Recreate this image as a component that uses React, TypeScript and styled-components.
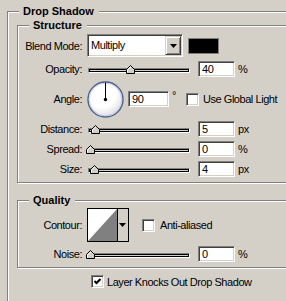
import React from "react";
import styled, { createGlobalStyle } from "styled-components";

const face = "#d4d0c8";
const shadow = "#808080";
const darkShadow = "#404040";

const GlobalStyle = createGlobalStyle`
  html, body { margin: 0; padding: 0; background: ${face}; }
  body {
    width: 286px;
    height: 301px;
    overflow: hidden;
    font-family: "Liberation Sans", Arial, sans-serif;
    font-size: 11px;
    letter-spacing: -0.45px;
    color: #000;
  }
  * { box-sizing: border-box; }
`;

const sunken = `
  border-style: solid;
  border-width: 1px;
  border-color: ${shadow} #fff #fff ${shadow};
  box-shadow: inset 1px 1px 0 ${darkShadow}, inset -1px -1px 0 ${face};
`;

const Dialog = styled.div`
  width: 286px;
  height: 301px;
  overflow: hidden;
  padding: 11px 0 0 7px;
`;

const Group = styled.section<{ $top?: number; $pad: string; $width: number }>`
  position: relative;
  width: ${(p) => p.$width}px;
  margin-top: ${(p) => p.$top ?? 0}px;
  padding: ${(p) => p.$pad};
  border: 1px solid ${shadow};
  box-shadow: inset 1px 1px 0 #fff, 1px 1px 0 #fff;
`;

const Title = styled.h3`
  position: absolute;
  top: -8px;
  left: 11px;
  margin: 0;
  padding: 0 5px 0 4px;
  line-height: 14px;
  font-size: 11px;
  font-weight: bold;
  letter-spacing: 0;
  background: ${face};
`;

const Row = styled.div<{ $h: number; $top?: number }>`
  display: flex;
  align-items: center;
  height: ${(p) => p.$h}px;
  margin-top: ${(p) => p.$top ?? 0}px;
  white-space: nowrap;
`;

const Label = styled.span`
  width: 64px;
  flex-shrink: 0;
  text-align: right;
`;

const Select = styled.div`
  display: flex;
  margin-left: 5px;
  width: 96px;
  height: 23px;
  background: #fff;
  ${sunken}
  padding: 1px;
`;

const SelectText = styled.span`
  flex: 1;
  padding-left: 2px;
  line-height: 19px;
`;

const SelectButton = styled.span`
  display: flex;
  align-items: center;
  justify-content: center;
  width: 16px;
  background: ${face};
  border-style: solid;
  border-width: 1px;
  border-color: ${face} ${darkShadow} ${darkShadow} ${face};
  box-shadow: inset 1px 1px 0 #fff, inset -1px -1px 0 ${shadow};
`;

const Swatch = styled.div`
  margin-left: 5px;
  width: 31px;
  height: 16px;
  background: #000;
  border: 1px solid ${shadow};
`;

const Slider = styled.div`
  position: relative;
  flex-shrink: 0;
  width: 102px;
  height: 20px;
  margin-left: 6px;
`;

const Track = styled.div`
  margin-top: 9px;
  height: 5px;
  border-style: solid;
  border-width: 1px;
  border-color: ${shadow} #fff #fff ${shadow};
  box-shadow: inset 1px 1px 0 #000, inset -1px -1px 0 #000;
  background: ${face};
`;

const Thumb = styled.svg`
  position: absolute;
  top: 6px;
`;

const Field = styled.input<{ $w: number; $gap: number }>`
  width: ${(p) => p.$w}px;
  height: 16px;
  margin: 0 0 0 ${(p) => p.$gap}px;
  padding: 0 0 0 3px;
  font: inherit;
  letter-spacing: inherit;
  color: #000;
  background: #fff;
  outline: none;
  ${sunken}
`;

const Unit = styled.span<{ $gap?: number }>`
  margin-left: ${(p) => p.$gap ?? 3}px;
`;

const Degree = styled.span`
  margin-left: 3px;
  align-self: flex-start;
  margin-top: 10px;
`;

const Dial = styled.svg`
  margin-left: 5px;
  flex-shrink: 0;
`;

const Box = styled.span<{ $gap: number }>`
  display: flex;
  align-items: center;
  justify-content: center;
  flex-shrink: 0;
  width: 13px;
  height: 13px;
  margin-left: ${(p) => p.$gap}px;
  background: #fff;
  ${sunken}
`;

const BoxLabel = styled.span<{ $gap: number }>`
  margin-left: ${(p) => p.$gap}px;
`;

const Contour = styled.div`
  display: flex;
  margin-left: 5px;
  width: 42px;
  height: 34px;
  border: 1px solid #000;
  background: ${face};
`;

const ContourArrow = styled.span`
  display: flex;
  align-items: center;
  justify-content: center;
  width: 10px;
  border-left: 1px solid #000;
`;

const KnockRow = styled(Row)`
  padding-left: 74px;
`;

const Arrow = () => (
  <svg width="7" height="4" viewBox="0 0 7 4">
    <polygon points="0,0 7,0 3.5,4" fill="#000" />
  </svg>
);

const Check = () => (
  <svg width="7" height="7" viewBox="0 0 7 7">
    <polyline points="0.5,3 2.5,5 6.5,1" fill="none" stroke="#000" strokeWidth="2" />
  </svg>
);

type SliderProps = { frac: number };

const SliderControl = ({ frac }: SliderProps) => (
  <Slider>
    <Track />
    <Thumb
      width="9"
      height="9"
      viewBox="0 0 9 9"
      style={{ left: Math.round(2 + frac * 100 - 4) }}
    >
      <polygon points="0.5,8.5 0.5,4.5 4.5,0.5 8.5,4.5 8.5,8.5" fill={face} stroke="#000" />
      <polyline points="1.5,7.5 1.5,4.9 4.5,1.9" fill="none" stroke="#fff" />
    </Thumb>
  </Slider>
);

type ValueProps = { label: string; frac: number; value: string; unit: string };

const SliderRow = ({ label, frac, value, unit }: ValueProps) => (
  <Row $h={20}>
    <Label>{label}</Label>
    <SliderControl frac={frac} />
    <Field $w={37} $gap={8} readOnly value={value} />
    <Unit>{unit}</Unit>
  </Row>
);

export default function App() {
  return (
    <Dialog>
      <GlobalStyle />
      <Group $width={400} $pad="13px 0 40px 9px">
        <Title>Drop Shadow</Title>

        <Group $width={360} $pad="8px 0 3px 0">
          <Title>Structure</Title>
          <Row $h={23}>
            <Label>Blend Mode:</Label>
            <Select>
              <SelectText>Multiply</SelectText>
              <SelectButton>
                <Arrow />
              </SelectButton>
            </Select>
            <Swatch />
          </Row>
          <Row $h={20} $top={2}>
            <Label>Opacity:</Label>
            <SliderControl frac={0.4} />
            <Field $w={37} $gap={8} readOnly value="40" />
            <Unit>%</Unit>
          </Row>
          <Row $h={40}>
            <Label>Angle:</Label>
            <Dial width="37" height="37" viewBox="0 0 37 37">
              <defs>
                <radialGradient id="dialFill" cx="0.4" cy="0.35" r="0.7">
                  <stop offset="0.55" stopColor="#ffffff" />
                  <stop offset="1" stopColor="#d9d9de" />
                </radialGradient>
              </defs>
              <circle cx="18.5" cy="18.5" r="17.5" fill="url(#dialFill)" stroke="#4b5f8c" strokeWidth="1.4" />
              <circle cx="18.5" cy="18.5" r="16.3" fill="none" stroke="#b9c3d8" strokeWidth="0.8" />
              <line x1="18.5" y1="18.5" x2="18.5" y2="1.5" stroke="#000" strokeWidth="1" />
              <circle cx="18.5" cy="18.5" r="1.7" fill="#000" />
            </Dial>
            <Field $w={41} $gap={4} readOnly value="90" />
            <Degree>°</Degree>
            <Box $gap={10} />
            <BoxLabel $gap={4}>Use Global Light</BoxLabel>
          </Row>
          <SliderRow label="Distance:" frac={0.05} value="5" unit="px" />
          <SliderRow label="Spread:" frac={0} value="0" unit="%" />
          <SliderRow label="Size:" frac={0.04} value="4" unit="px" />
        </Group>

        <Group $width={360} $top={17} $pad="7px 0 3px 0">
          <Title>Quality</Title>
          <Row $h={34}>
            <Label>Contour:</Label>
            <Contour>
              <svg width="29" height="32" viewBox="0 0 29 32">
                <rect width="29" height="32" fill="#fff" />
                <polygon points="0,32 29,0 29,32" fill={shadow} />
              </svg>
              <ContourArrow>
                <Arrow />
              </ContourArrow>
            </Contour>
            <Box $gap={13} />
            <BoxLabel $gap={5}>Anti-aliased</BoxLabel>
          </Row>
          <Row $h={20} $top={2}>
            <Label>Noise:</Label>
            <SliderControl frac={0} />
            <Field $w={37} $gap={8} readOnly value="0" />
            <Unit>%</Unit>
          </Row>
        </Group>

        <KnockRow $h={13} $top={7}>
          <Box $gap={0}>
            <Check />
          </Box>
          <BoxLabel $gap={3}>Layer Knocks Out Drop Shadow</BoxLabel>
        </KnockRow>
      </Group>
    </Dialog>
  );
}
